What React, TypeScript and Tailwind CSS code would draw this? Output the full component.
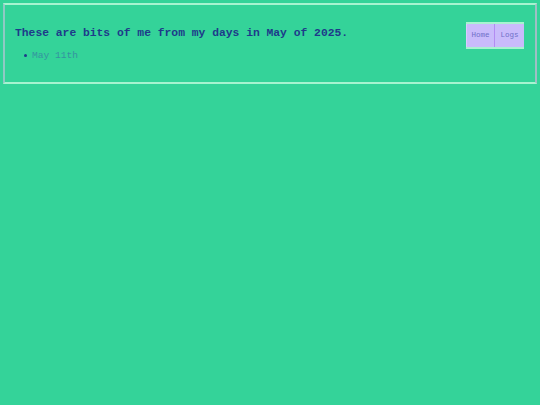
export default function App() {
  return (
    <div className="min-h-screen bg-[#34d399] p-[3px] font-['Liberation_Mono',monospace]">
      <div className="flex items-start justify-between border-2 border-t-[#a7f3d0] border-b-[#a7f3d0] border-l-[#8fc9c4] border-r-[#9fbfc4] pl-[10px] pr-[10px] pt-[17px] pb-[20px]">
        <div>
          <h1 className="text-[11.33px] font-bold leading-[14px] text-[#1e3a8a] mt-[4px]">
            These are bits of me from my days in May of 2025.
          </h1>
          <ul className="mt-[10px] pl-[9px] text-[9.6px] leading-[12px]">
            <li className="flex items-center gap-[5px]">
              <span className="h-[3px] w-[3px] rounded-full bg-[#1e3a8a] -mt-[1px]" />
              <a href="#" className="text-[#3592a0]">May 11th</a>
            </li>
          </ul>
        </div>
        <nav className="flex border-y-2 border-y-[#a7f3d0] mr-[1px]">
          <a href="#" className="flex h-[23px] w-[29px] items-center justify-center bg-[#c9bbfb] text-[7.5px] text-[#6f6fc9] border-l border-l-[#d9ccff] border-r border-r-[#b38cf2]">
            Home
          </a>
          <a href="#" className="flex h-[23px] w-[29px] items-center justify-center bg-[#c9bbfb] text-[7.5px] text-[#6f6fc9]">
            Logs
          </a>
        </nav>
      </div>
    </div>
  );
}
